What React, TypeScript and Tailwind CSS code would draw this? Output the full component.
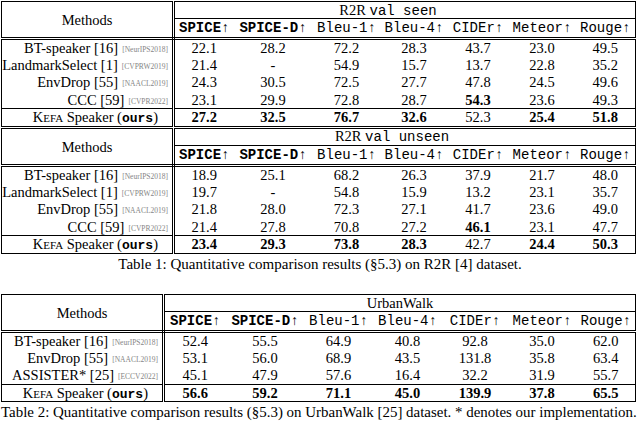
import React from "react";

type Row = { name: string; cite: string; venue?: string; vals: string[]; ours?: boolean };

const seen: Row[] = [
  { name: "BT-speaker", cite: "[16]", venue: "[NeurIPS2018]", vals: ["22.1", "28.2", "72.2", "28.3", "43.7", "23.0", "49.5"] },
  { name: "LandmarkSelect", cite: "[1]", venue: "[CVPRW2019]", vals: ["21.4", "-", "54.9", "15.7", "13.7", "22.8", "35.2"] },
  { name: "EnvDrop", cite: "[55]", venue: "[NAACL2019]", vals: ["24.3", "30.5", "72.5", "27.7", "47.8", "24.5", "49.6"] },
  { name: "CCC", cite: "[59]", venue: "[CVPR2022]", vals: ["23.1", "29.9", "72.8", "28.7", "*54.3", "23.6", "49.3"] },
  { name: "", cite: "", ours: true, vals: ["*27.2", "*32.5", "*76.7", "*32.6", "52.3", "*25.4", "*51.8"] },
];

const unseen: Row[] = [
  { name: "BT-speaker", cite: "[16]", venue: "[NeurIPS2018]", vals: ["18.9", "25.1", "68.2", "26.3", "37.9", "21.7", "48.0"] },
  { name: "LandmarkSelect", cite: "[1]", venue: "[CVPRW2019]", vals: ["19.7", "-", "54.8", "15.9", "13.2", "23.1", "35.7"] },
  { name: "EnvDrop", cite: "[55]", venue: "[NAACL2019]", vals: ["21.8", "28.0", "72.3", "27.1", "41.7", "23.6", "49.0"] },
  { name: "CCC", cite: "[59]", venue: "[CVPR2022]", vals: ["21.4", "27.8", "70.8", "27.2", "*46.1", "23.1", "47.7"] },
  { name: "", cite: "", ours: true, vals: ["*23.4", "*29.3", "*73.8", "*28.3", "42.7", "*24.4", "*50.3"] },
];

const urban: Row[] = [
  { name: "BT-speaker", cite: "[16]", venue: "[NeurIPS2018]", vals: ["52.4", "55.5", "64.9", "40.8", "92.8", "35.0", "62.0"] },
  { name: "EnvDrop", cite: "[55]", venue: "[NAACL2019]", vals: ["53.1", "56.0", "68.9", "43.5", "131.8", "35.8", "63.4"] },
  { name: "ASSISTER*", cite: "[25]", venue: "[ECCV2022]", vals: ["45.1", "47.9", "57.6", "16.4", "32.2", "31.9", "55.7"] },
  { name: "", cite: "", ours: true, vals: ["*56.6", "*59.2", "*71.1", "*45.0", "*139.9", "*37.8", "*65.5"] },
];

const heads = ["SPICE↑", "SPICE-D↑", "Bleu-1↑", "Bleu-4↑", "CIDEr↑", "Meteor↑", "Rouge↑"];

function Ours() {
  return (
    <span>
      K<span className="text-[11px]">EFA</span> Speaker (
      <span className="font-['Liberation_Mono',monospace] font-bold text-[13px]">ours</span>)
    </span>
  );
}

function Block({
  rows,
  title,
  widths,
  titleShift,
}: {
  rows: Row[];
  title: React.ReactNode;
  widths: number[];
  titleShift: string;
}) {
  return (
    <table className="table-fixed border-collapse border border-black ml-[1px] leading-none">
      <colgroup>
        {widths.map((w, i) => (
          <col key={i} style={{ width: w }} />
        ))}
      </colgroup>
      <thead>
        <tr className="h-[17px]">
          <th rowSpan={2} className="font-normal border-r-[3px] border-double border-black border-b-[3px] pt-[1px]">
            Methods
          </th>
          <th colSpan={7} className={`font-normal border-b border-black ${titleShift}`}>
            {title}
          </th>
        </tr>
        <tr className="h-[20px] border-b-[3px] border-double border-black">
          {heads.map((h, i) => (
            <th
              key={h}
              className={`font-['Liberation_Mono',monospace] text-[14px] whitespace-nowrap ${i < 2 ? "font-bold" : "font-normal"}`}
            >
              {h}
            </th>
          ))}
        </tr>
      </thead>
      <tbody>
        {rows.map((r, ri) => (
          <tr key={ri} className={`h-[17.6px] ${r.ours ? "border-t border-black" : ""}`}>
            <td
              className={`border-r-[3px] border-double border-black whitespace-nowrap text-right ${r.ours ? "pr-[14px]" : "pr-[4px]"}`}
            >
              {r.ours ? (
                <Ours />
              ) : (
                <>
                  {r.name} {r.cite}
                  <span className="text-[7.5px] text-[#858585] ml-[4px] align-[1px]">{r.venue}</span>
                </>
              )}
            </td>
            {r.vals.map((v, vi) => (
              <td key={vi} className={`text-center ${v.startsWith("*") ? "font-bold" : ""}`}>
                {v.replace("*", "")}
              </td>
            ))}
          </tr>
        ))}
      </tbody>
    </table>
  );
}

export default function App() {
  const w1 = [172, 60, 79, 68, 67, 61, 67, 60];
  const w2 = [162, 62, 79, 68, 70, 65, 69, 59];
  const mono = "font-['Liberation_Mono',monospace] text-[14px]";
  return (
    <div className="w-[640px] h-[422px] bg-white text-black font-['Liberation_Serif',serif] text-[14.5px] overflow-hidden pt-[1px]">
      <Block
        rows={seen}
        widths={w1}
        titleShift="pr-[34px]"
        title={
          <>
            R2R <span className={mono}>val seen</span>
          </>
        }
      />
      <div className="h-[1px]" />
      <Block
        rows={unseen}
        widths={w1}
        titleShift="pr-[26px]"
        title={
          <>
            R2R <span className={mono}>val unseen</span>
          </>
        }
      />
      <p className="text-center text-[15px] mt-[3px] leading-none">
        Table 1: Quantitative comparison results (§5.3) on R2R [4] dataset.
      </p>
      <div className="h-[22px]" />
      <Block rows={urban} widths={w2} titleShift="" title="UrbanWalk" />
      <p className="whitespace-nowrap text-[14.95px] mt-[3px] ml-[1px] leading-none">
        Table 2: Quantitative comparison results (§5.3) on UrbanWalk [25] dataset. * denotes our implementation.
      </p>
    </div>
  );
}
